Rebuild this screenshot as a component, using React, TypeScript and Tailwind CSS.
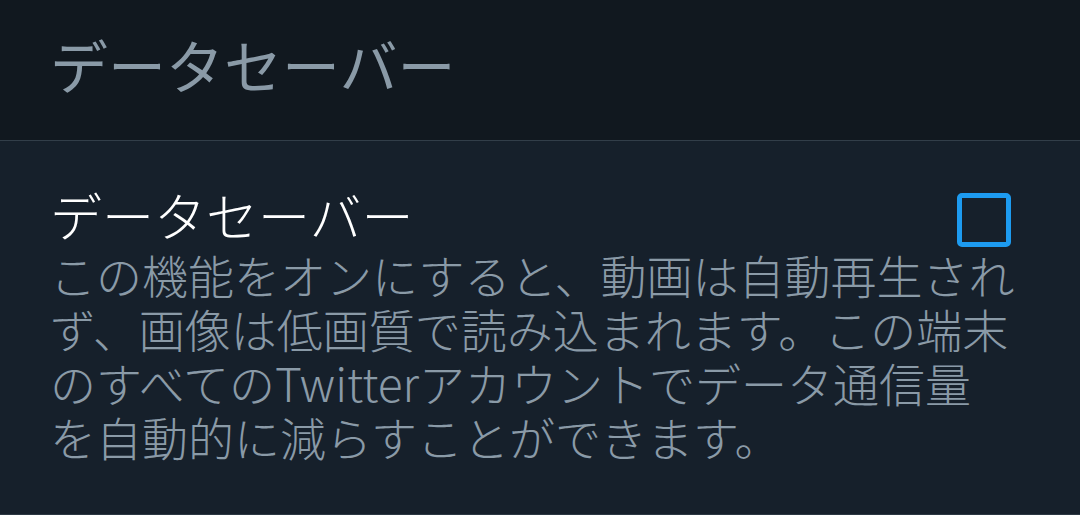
export default function App() {
  const font = { fontFamily: '"Noto Sans CJK JP", "Noto Sans", sans-serif' };
  return (
    <div className="w-[1080px] h-[515px] overflow-hidden bg-[#16202b]" style={font}>
      <div className="h-[140px] bg-[#11181f] pl-[50px] pt-[29px]">
        <div className="text-[58px] leading-[70px] text-[#8a9aa7] whitespace-nowrap">データセーバー</div>
      </div>
      <div className="h-px bg-[#323e49]" />
      <div className="bg-[#16202b] pl-[50px] pr-[69px] pt-[46px] pb-[51px] border-b border-[#2c3843]">
        <div className="flex justify-between items-start">
          <div className="text-[52px] leading-[56px] font-light text-white whitespace-nowrap">データセーバー</div>
          <div className="mt-[6px] w-[54px] h-[54px] rounded-[5px] border-[5px] border-[#1d9bf0]" />
        </div>
        <div className="text-[46px] leading-[54px] font-light text-[#8a9aa7] whitespace-nowrap">
          <div>この機能をオンにすると、動画は自動再生され</div>
          <div>ず、画像は低画質で読み込まれます。この端末</div>
          <div>のすべてのTwitterアカウントでデータ通信量</div>
          <div>を自動的に減らすことができます。</div>
        </div>
      </div>
    </div>
  );
}
